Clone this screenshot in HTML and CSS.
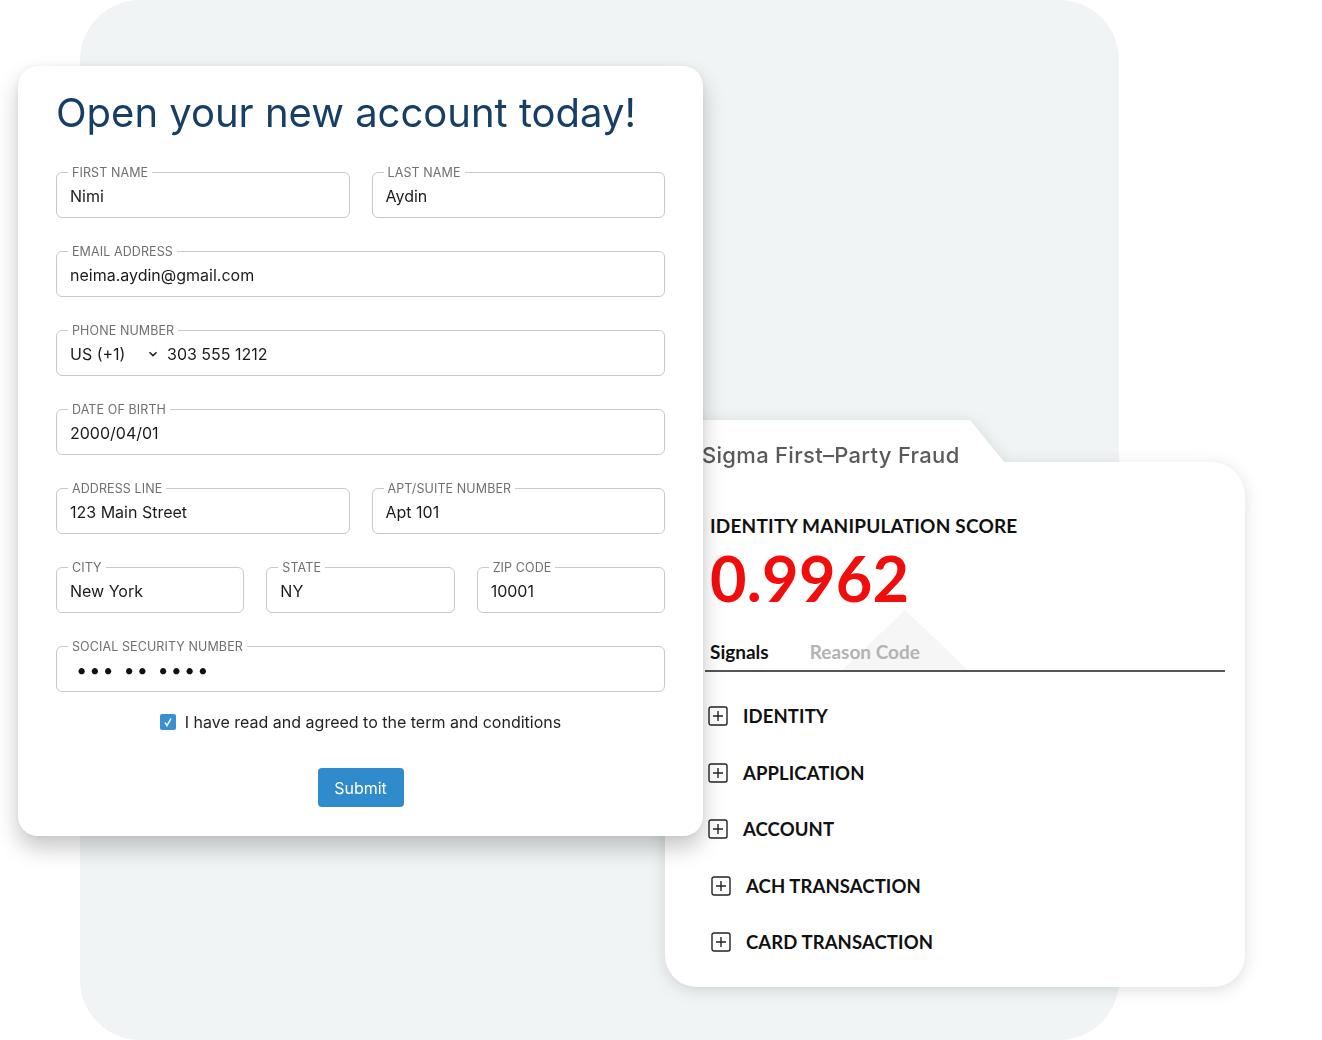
FILE: index.html
```html
<!DOCTYPE html>
<html lang="en">
<head>
  <meta charset="UTF-8">
  <meta name="viewport" content="width=device-width, initial-scale=1.0">
  <title>Open your new account</title>
  <link rel="stylesheet" href="styles.css">
</head>
<body>
  <div class="stage">
    <div class="backdrop"></div>

    <section class="fraud">
      <div class="fraud-tab">Sigma First&ndash;Party Fraud</div>
      <div class="fraud-body">
        <h2 class="score-label">IDENTITY MANIPULATION SCORE</h2>
        <div class="score">0.9962</div>
        <div class="tabs">
          <span class="tab active">Signals</span>
          <span class="tab">Reason Code</span>
        </div>
        <ul class="signals">
          <li><svg class="plus" viewBox="0 0 20 20"><rect x="1" y="1" width="18" height="18" rx="2"/><path d="M10 5v10M5 10h10"/></svg>IDENTITY</li>
          <li><svg class="plus" viewBox="0 0 20 20"><rect x="1" y="1" width="18" height="18" rx="2"/><path d="M10 5v10M5 10h10"/></svg>APPLICATION</li>
          <li><svg class="plus" viewBox="0 0 20 20"><rect x="1" y="1" width="18" height="18" rx="2"/><path d="M10 5v10M5 10h10"/></svg>ACCOUNT</li>
          <li class="shift"><svg class="plus" viewBox="0 0 20 20"><rect x="1" y="1" width="18" height="18" rx="2"/><path d="M10 5v10M5 10h10"/></svg>ACH TRANSACTION</li>
          <li class="shift"><svg class="plus" viewBox="0 0 20 20"><rect x="1" y="1" width="18" height="18" rx="2"/><path d="M10 5v10M5 10h10"/></svg>CARD TRANSACTION</li>
        </ul>
      </div>
    </section>

    <form class="signup">
      <h1>Open your new account today!</h1>

      <div class="row two">
        <fieldset class="field"><legend>First name</legend><div class="value">Nimi</div></fieldset>
        <fieldset class="field"><legend>Last name</legend><div class="value">Aydin</div></fieldset>
      </div>

      <fieldset class="field"><legend>Email address</legend><div class="value">neima.aydin@gmail.com</div></fieldset>

      <fieldset class="field">
        <legend>Phone number</legend>
        <div class="value phone">
          <span class="country">US (+1)</span>
          <svg class="chevron" viewBox="0 0 10 6"><path d="M1.5 1.2 5 4.6 8.5 1.2"/></svg>
          <span>303 555 1212</span>
        </div>
      </fieldset>

      <fieldset class="field"><legend>Date of birth</legend><div class="value">2000/04/01</div></fieldset>

      <div class="row two">
        <fieldset class="field"><legend>Address line</legend><div class="value">123 Main Street</div></fieldset>
        <fieldset class="field"><legend>Apt/Suite number</legend><div class="value">Apt 101</div></fieldset>
      </div>

      <div class="row three">
        <fieldset class="field"><legend>City</legend><div class="value">New York</div></fieldset>
        <fieldset class="field"><legend>State</legend><div class="value">NY</div></fieldset>
        <fieldset class="field"><legend>Zip code</legend><div class="value">10001</div></fieldset>
      </div>

      <fieldset class="field"><legend>Social security number</legend><div class="value ssn">&bull;&bull;&bull; &bull;&bull; &bull;&bull;&bull;&bull;</div></fieldset>

      <label class="agree">
        <span class="checkbox"><svg viewBox="0 0 16 16"><path d="M5 8.6 7 11.5 11 4.5"/></svg></span>
        I have read and agreed to the term and conditions
      </label>

      <div class="actions">
        <button type="button" class="submit">Submit</button>
      </div>
    </form>
  </div>
</body>
</html>
```

FILE: styles.css
```css
body {
  margin: 0;
  padding: 0;
  background: #ffffff;
  font-family: 'Inter', 'Liberation Sans', sans-serif;
  overflow: hidden;
}

.stage {
  display: grid;
  width: 1322px;
  height: 1040px;
  overflow: hidden;
}

.stage > * {
  grid-area: 1 / 1;
  align-self: start;
  justify-self: start;
}

.backdrop {
  margin-left: 80px;
  width: 1039px;
  height: 1040px;
  border-radius: 60px;
  background: #f0f4f5;
}

/* ---------- fraud card ---------- */

.fraud {
  margin: 420px 0 0 665px;
  width: 580px;
  font-family: 'Lato', 'Inter', sans-serif;
  filter: drop-shadow(0 3px 8px rgba(0, 0, 0, 0.13));
}

.fraud-tab {
  position: relative;
  z-index: 1;
  height: 42px;
  padding-left: 37px;
  font-family: 'Inter', sans-serif;
  font-size: 22px;
  font-weight: 500;
  line-height: 26px;
  color: #5a5a5a;
  letter-spacing: 0.3px;
  box-sizing: border-box;
  padding-top: 22px;
}

.fraud-tab::before {
  content: "";
  position: absolute;
  left: 0;
  top: 0;
  width: 340px;
  height: 43px;
  background: #fff;
  border-top-left-radius: 14px;
  clip-path: polygon(0 0, 305px 0, 340px 43px, 0 43px);
  z-index: -1;
}

.fraud-body {
  height: 525px;
  box-sizing: border-box;
  padding: 53px 20px 0 45px;
  background: #fff;
  border-radius: 0 34px 32px 32px;
  position: relative;
}

.fraud-body::before {
  content: "";
  position: absolute;
  left: 175px;
  top: 148px;
  width: 130px;
  height: 62px;
  background: #f6f6f6;
  clip-path: polygon(50% 0, 100% 100%, 0 100%);
}

.score-label {
  position: relative;
  margin: 0;
  font-size: 19px;
  font-weight: 700;
  line-height: 22px;
  color: #111;
  letter-spacing: 0.2px;
}

.score {
  position: relative;
  margin-top: 9px;
  font-size: 63px;
  font-weight: 700;
  line-height: 64px;
  color: #f20d0d;
  letter-spacing: 0.3px;
}

.tabs {
  position: relative;
  display: flex;
  gap: 41px;
  margin: 31px 0 0 -5px;
  padding: 0 0 7px 5px;
  border-bottom: 2px solid #555;
  font-size: 19px;
  font-weight: 700;
  line-height: 22px;
}

.tab {
  color: #b3b3b3;
}

.tab.active {
  color: #111;
}

.signals {
  list-style: none;
  margin: 16px 0 0 -2px;
  padding: 0;
}

.signals li {
  display: flex;
  align-items: center;
  gap: 15px;
  height: 56.5px;
  font-size: 18.5px;
  font-weight: 700;
  color: #111;
  letter-spacing: 0.1px;
}

.signals li.shift {
  margin-left: 3px;
}

.plus {
  width: 20px;
  height: 20px;
  fill: none;
  stroke: #222;
  stroke-width: 1.4;
}

/* ---------- sign-up form ---------- */

.signup {
  position: relative;
  z-index: 2;
  margin: 66px 0 0 18px;
  width: 685px;
  height: 770px;
  box-sizing: border-box;
  padding: 21px 38px 0;
  background: #fff;
  border-radius: 20px;
  box-shadow: 0 12px 22px rgba(0, 0, 0, 0.22), 0 0 6px rgba(0, 0, 0, 0.06);
  display: flex;
  flex-direction: column;
  gap: 26px;
}

.signup h1 {
  margin: 0;
  font-size: 40px;
  font-weight: 400;
  line-height: 52px;
  color: #173e65;
  white-space: nowrap;
}

.row {
  display: grid;
  gap: 22px;
}

.row.two {
  grid-template-columns: 1fr 1fr;
}

.row.three {
  grid-template-columns: 1fr 1fr 1fr;
}

.field {
  margin: 0;
  min-width: 0;
  padding: 0 13px 10px;
  border: 1px solid #c5c9cd;
  border-radius: 6px;
}

.field legend {
  margin-left: -2px;
  padding: 0 4px;
  font-size: 12.5px;
  line-height: 15px;
  color: #707070;
  text-transform: uppercase;
  letter-spacing: 0.1px;
}

.value {
  padding-top: 5px;
  font-size: 16px;
  line-height: 22px;
  color: #1b1b1b;
}

.phone {
  display: flex;
  align-items: center;
}

.country {
  width: 78px;
}

.chevron {
  width: 10px;
  height: 6px;
  margin-right: 9px;
  fill: none;
  stroke: #222;
  stroke-width: 1.5;
}

.ssn {
  padding-left: 6px;
  font-size: 20px;
  letter-spacing: 2px;
  color: #111;
}

.agree {
  display: flex;
  align-items: center;
  justify-content: center;
  gap: 9px;
  margin-top: -8px;
  font-size: 16px;
  line-height: 24px;
  color: #232323;
}

.checkbox {
  width: 16px;
  height: 16px;
  border-radius: 2px;
  background: #3a8fd3;
  display: flex;
}

.checkbox svg {
  width: 16px;
  height: 16px;
  fill: none;
  stroke: #fff;
  stroke-width: 1.5;
}

.actions {
  display: flex;
  justify-content: center;
  margin-top: 8px;
}

.submit {
  width: 86px;
  height: 39px;
  border: none;
  border-radius: 4px;
  background: #2f8bcb;
  color: #fff;
  font-family: 'Inter', sans-serif;
  font-size: 16px;
  cursor: pointer;
}
```
